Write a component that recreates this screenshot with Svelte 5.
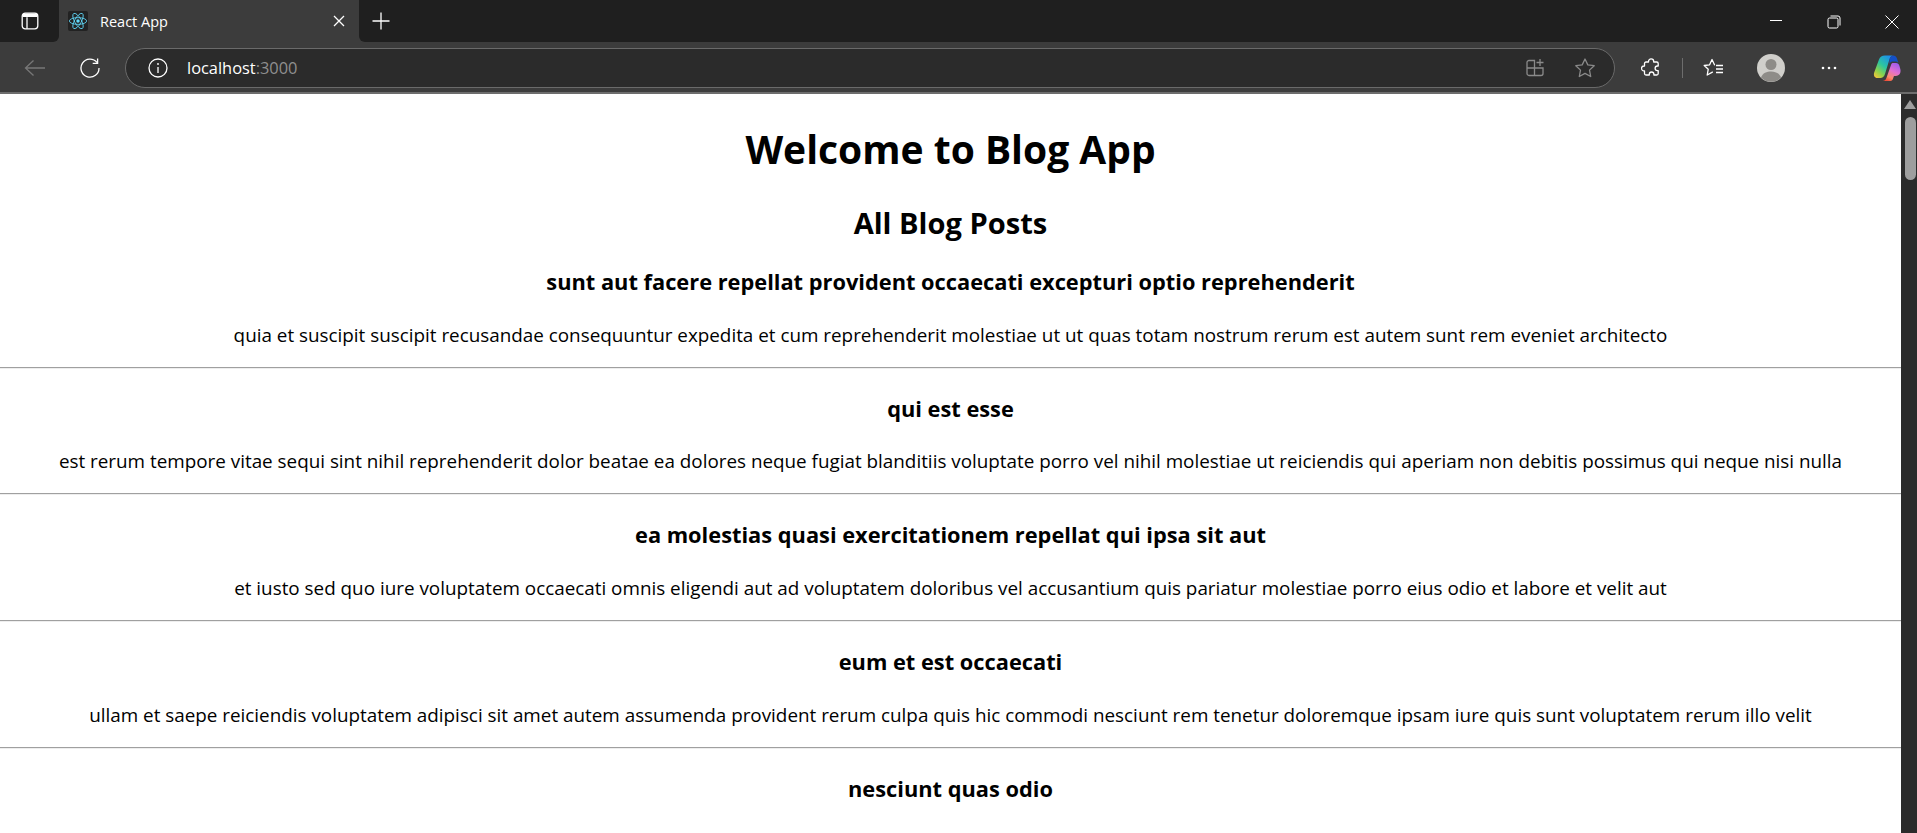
<script>
	const posts = [
		{
			title: 'sunt aut facere repellat provident occaecati excepturi optio reprehenderit',
			body: 'quia et suscipit suscipit recusandae consequuntur expedita et cum reprehenderit molestiae ut ut quas totam nostrum rerum est autem sunt rem eveniet architecto'
		},
		{
			title: 'qui est esse',
			body: 'est rerum tempore vitae sequi sint nihil reprehenderit dolor beatae ea dolores neque fugiat blanditiis voluptate porro vel nihil molestiae ut reiciendis qui aperiam non debitis possimus qui neque nisi nulla'
		},
		{
			title: 'ea molestias quasi exercitationem repellat qui ipsa sit aut',
			body: 'et iusto sed quo iure voluptatem occaecati omnis eligendi aut ad voluptatem doloribus vel accusantium quis pariatur molestiae porro eius odio et labore et velit aut'
		},
		{
			title: 'eum et est occaecati',
			body: 'ullam et saepe reiciendis voluptatem adipisci sit amet autem assumenda provident rerum culpa quis hic commodi nesciunt rem tenetur doloremque ipsam iure quis sunt voluptatem rerum illo velit'
		},
		{ title: 'nesciunt quas odio' }
	]
</script>

<div class="window">
	<div class="tabstrip">
		<button class="strip-btn" aria-label="Tab actions">
			<svg width="18" height="18" viewBox="0 0 18 18" fill="none" stroke="#fff" stroke-width="1.3">
				<rect x="1.2" y="1.2" width="15.6" height="15.6" rx="3" />
				<path d="M6 5.200v11.600" />
				<path d="M1.500 5V3.200a2 2 0 0 1 2-1.800h11a2 2 0 0 1 2 1.800V5z" fill="#fff" stroke="none" />
			</svg>
		</button>
		<div class="tab">
			<span class="favicon">
				<svg width="20" height="20" viewBox="-11 -11 22 22" fill="none" stroke="#61dafb" stroke-width="0.9">
					<circle r="1.900" fill="#61dafb" stroke="none" />
					<ellipse rx="9.500" ry="3.700" />
					<ellipse rx="9.500" ry="3.700" transform="rotate(60)" />
					<ellipse rx="9.500" ry="3.700" transform="rotate(120)" />
				</svg>
			</span>
			<span class="tab-title">React App</span>
			<svg class="tab-close" width="12" height="12" viewBox="0 0 12 12" stroke="#fff" stroke-width="1.3">
				<path d="M1 1l10 10M11 1L1 11" />
			</svg>
		</div>
		<div class="strip-rest">
			<svg class="new-tab" width="18" height="18" viewBox="0 0 18 18" stroke="#fff" stroke-width="1.3">
				<path d="M9 0.500v17M0.500 9h17" />
			</svg>
			<div class="win-controls">
				<svg width="14" height="14" viewBox="0 0 14 14" stroke="#fff" stroke-width="1"><path d="M1 5.500h12" /></svg>
				<svg width="14" height="14" viewBox="0 0 14 14" fill="none" stroke="#fff" stroke-width="1">
					<rect x="1" y="3" width="10" height="10" rx="1.500" />
					<path d="M3.500 1h7.500a2 2 0 0 1 2 2v7.500" />
				</svg>
				<svg width="14" height="14" viewBox="0 0 14 14" stroke="#fff" stroke-width="1"><path d="M0.500 0.500l13 13M13.500 0.500l-13 13" /></svg>
			</div>
		</div>
	</div>
	<div class="toolbar">
		<svg class="back" width="22" height="18" viewBox="0 0 22 18" fill="none" stroke="#777" stroke-width="1.3">
			<path d="M21 9H1.500M9.500 1.500L1.500 9l8 7.500" />
		</svg>
		<svg class="reload" width="20" height="20" viewBox="0 0 20 20" fill="none" stroke="#fff" stroke-width="1.300">
			<path d="M17 4.500A9 9 0 1 0 19 10" />
			<path d="M17.600 0.500v4.900h-4.900" />
		</svg>
		<div class="address">
			<svg width="20" height="20" viewBox="0 0 20 20" fill="none" stroke="#fff" stroke-width="1.300">
				<circle cx="10" cy="10" r="9" />
				<path d="M10 9v6" />
				<circle cx="10" cy="6" r="0.900" fill="#fff" stroke="none" />
			</svg>
			<span class="url">localhost<span class="port">:3000</span></span>
			<span class="spacer"></span>
			<svg width="20" height="20" viewBox="0 0 20 20" fill="none" stroke="#8a8a8a" stroke-width="1.300">
				<path d="M9.500 2.500v15H4a2 2 0 0 1-2-2v-11a2 2 0 0 1 2-2zM2 10h16v5.500a2 2 0 0 1-2 2H9.500" />
				<path d="M15 1v7M11.500 4.500h7" />
			</svg>
			<svg class="star" width="22" height="22" viewBox="0 0 22 22" fill="none" stroke="#8a8a8a" stroke-width="1.300">
				<path d="M11 2l2.800 5.900 6.400.8-4.700 4.400 1.200 6.400-5.700-3.100-5.700 3.100 1.200-6.400-4.700-4.400 6.400-.8z" stroke-linejoin="round" />
			</svg>
		</div>
		<svg class="ext" width="20" height="20" viewBox="0 0 20 20" fill="none" stroke="#fff" stroke-width="1.300">
			<path d="M7.500 3.500a2.600 2.600 0 0 1 5.200 0V4h3a1.500 1.500 0 0 1 1.500 1.500V8h-.8a2.300 2.300 0 0 0 0 4.600h.8v2.900a1.500 1.500 0 0 1-1.500 1.500h-2.800v-.7a2.300 2.300 0 0 0-4.600 0v.7H5a1.500 1.500 0 0 1-1.500-1.500v-2.700h-.6a2.400 2.400 0 0 1 0-4.800h.6V5.500A1.500 1.500 0 0 1 5 4h2.500z" stroke-linejoin="round" />
		</svg>
		<span class="divider"></span>
		<svg class="favs" width="21" height="20" viewBox="0 0 21 20" fill="none" stroke="#fff" stroke-width="1.300">
			<path d="M11.500 6.800L9 1.500 6.600 6.800l-5.400.7 4 3.800-1 5.700 5.200-2.900" stroke-linejoin="round" stroke-linecap="round" />
			<path d="M13 7.500h7M13 11h7M13 14.500h7" />
		</svg>
		<span class="avatar">
			<svg width="28" height="28" viewBox="0 0 28 28">
				<circle cx="14" cy="14" r="14" fill="#d0cfcb" />
				<circle cx="14" cy="10.500" r="5.500" fill="#8e8c88" />
				<path d="M4 23.500c1.500-4.500 6-6 10-6s8.500 1.500 10 6a14 14 0 0 1-20 0z" fill="#8e8c88" />
			</svg>
		</span>
		<svg class="more" width="16" height="4" viewBox="0 0 16 4" fill="#fff">
			<circle cx="2" cy="2" r="1.300" /><circle cx="8" cy="2" r="1.300" /><circle cx="14" cy="2" r="1.300" />
		</svg>
		<svg class="copilot" width="28" height="28" viewBox="0 0 28 28">
			<defs>
				<linearGradient id="cpA" x1="0.8" y1="0" x2="0.1" y2="1">
					<stop offset="0" stop-color="#1c8cf0" />
					<stop offset="0.45" stop-color="#2cc5a0" />
					<stop offset="0.75" stop-color="#8ed24a" />
					<stop offset="1" stop-color="#f8c53a" />
				</linearGradient>
				<linearGradient id="cpB" x1="0.8" y1="0" x2="0.3" y2="1">
					<stop offset="0" stop-color="#9a5cf0" />
					<stop offset="0.45" stop-color="#e36fd0" />
					<stop offset="0.8" stop-color="#fb8a6a" />
					<stop offset="1" stop-color="#f0503c" />
				</linearGradient>
			</defs>
			<path d="M19.500 9h3.500c1.700 0 2.800 1 3.400 2.800l.9 3.200c1 4.200-1 7-4.400 7H21l-1.300 3.500c-.6 1-1.800 1.500-3 1.500H9.500c2 0 3.200-1 4-3.200L18 11c.3-1 .8-2 1.500-2z" fill="url(#cpB)" />
			<path d="M12 1.500h8c-2 .5-3 2-3.600 4L12 20c-.8 2.800-2.500 4-4.800 4H4.500C1.500 24 .3 21.500 1.200 18.500L6 5.500C6.900 3 9 1.500 12 1.500z" fill="url(#cpA)" />
			<path d="M16.500 5.500c.6-2 1.600-3.500 3.500-4 2 0 3.300 1 4 3l1.300 4.500c-.8-1-1.700-1.500-2.800-1.500h-3c-1.500 0-2.500 1-3 2.500z" fill="#1450c8" />
		</svg>
	</div>
	<div class="viewport">
		<main class="page">
			<h1>Welcome to Blog App</h1>
			<h2>All Blog Posts</h2>
			{#each posts as post}
				<div class="post">
					<h3>{post.title}</h3>
					{#if post.body}
						<p>{post.body}</p>
						<hr />
					{/if}
				</div>
			{/each}
		</main>
		<div class="scrollbar">
			<span class="arrow"></span>
			<span class="thumb"></span>
		</div>
	</div>
</div>

<style>
	:global(body) {
		margin: 0;
		overflow: hidden;
	}

	.window {
		width: 1917px;
		height: 833px;
		display: flex;
		flex-direction: column;
		overflow: hidden;
		background: #fff;
		font-family: 'Open Sans', 'Noto Sans', sans-serif;
	}

	.tabstrip {
		height: 42px;
		flex: none;
		display: flex;
		align-items: stretch;
		background: #3c3c3c;
	}

	.strip-btn {
		width: 59px;
		padding: 0 0 0 21px;
		display: flex;
		align-items: center;
		border: 0;
		background: #1f1f1f;
		border-radius: 0 0 6px 0;
	}

	.tab {
		width: 300px;
		box-sizing: border-box;
		padding: 0 14px 0 9px;
		display: flex;
		align-items: center;
		background: #3c3c3c;
	}

	.favicon {
		width: 20px;
		height: 20px;
		background: #222;
		border-radius: 2px;
		display: flex;
		margin-right: 12px;
	}

	.tab-title {
		flex: 1;
		color: #fff;
		font-size: 14.500px;
	}

	.strip-rest {
		flex: 1;
		display: flex;
		background: #1f1f1f;
		border-radius: 0 0 0 6px;
	}

	.new-tab {
		margin: 12px 0 0 13px;
	}

	.win-controls {
		margin-left: auto;
		display: flex;
		gap: 44px;
		padding: 15px 18px 0 0;
	}

	.toolbar {
		height: 52px;
		flex: none;
		box-sizing: border-box;
		padding-top: 1px;
		display: flex;
		align-items: center;
		background: #3c3c3c;
		border-bottom: 2px solid #6d6d6d;
	}

	.back {
		margin-left: 24px;
	}

	.reload {
		margin-left: 34px;
	}

	.address {
		width: 1490px;
		height: 40px;
		margin-left: 25px;
		box-sizing: border-box;
		padding: 0 18px 0 22px;
		display: flex;
		align-items: center;
		background: #2b2b2b;
		border: 1px solid #6a6a6a;
		border-radius: 20px;
	}

	.url {
		margin-left: 19px;
		color: #fff;
		font-size: 16.400px;
	}

	.port {
		color: #8f8f8f;
	}

	.spacer {
		flex: 1;
	}

	.star {
		margin-left: 29px;
	}

	.ext {
		margin-left: 26px;
	}

	.divider {
		width: 1px;
		height: 20px;
		margin-left: 21px;
		background: #6d6d6d;
	}

	.favs {
		margin-left: 20px;
	}

	.avatar {
		display: flex;
		margin-left: 33px;
	}

	.more {
		margin-left: 36px;
	}

	.copilot {
		margin-left: 36px;
	}

	.viewport {
		flex: 1;
		min-height: 0;
		display: flex;
	}

	.page {
		flex: 1;
		min-width: 0;
		overflow: hidden;
		color: #000;
		text-align: center;
	}

	h1 {
		margin: 0;
		padding-top: 28px;
		font-size: 39px;
		line-height: 54px;
		font-weight: 700;
	}

	h2 {
		margin: 28px 0 0;
		font-size: 29.100px;
		line-height: 38px;
		font-weight: 700;
	}

	h3 {
		margin: 25px 0 0;
		font-size: 21.800px;
		line-height: 30px;
		font-weight: 700;
	}

	p {
		margin: 25.500px 0 0;
		font-size: 18.850px;
		line-height: 25.670px;
	}

	hr {
		margin: 18.500px 0 0;
		border: 0;
		border-top: 1px solid #a0a0a0;
		border-bottom: 1px solid #eee;
	}

	.scrollbar {
		width: 16px;
		flex: none;
		box-sizing: border-box;
		padding-right: 1px;
		background: #2b2b2b;
		display: flex;
		flex-direction: column;
		align-items: flex-end;
	}

	.arrow {
		margin-top: 6px;
		width: 0;
		height: 0;
		border-left: 6px solid transparent;
		border-right: 6px solid transparent;
		border-bottom: 9px solid #9e9e9e;
	}

	.thumb {
		margin-top: 8px;
		width: 11px;
		height: 63px;
		border-radius: 6px;
		background: #9e9e9e;
	}
</style>
